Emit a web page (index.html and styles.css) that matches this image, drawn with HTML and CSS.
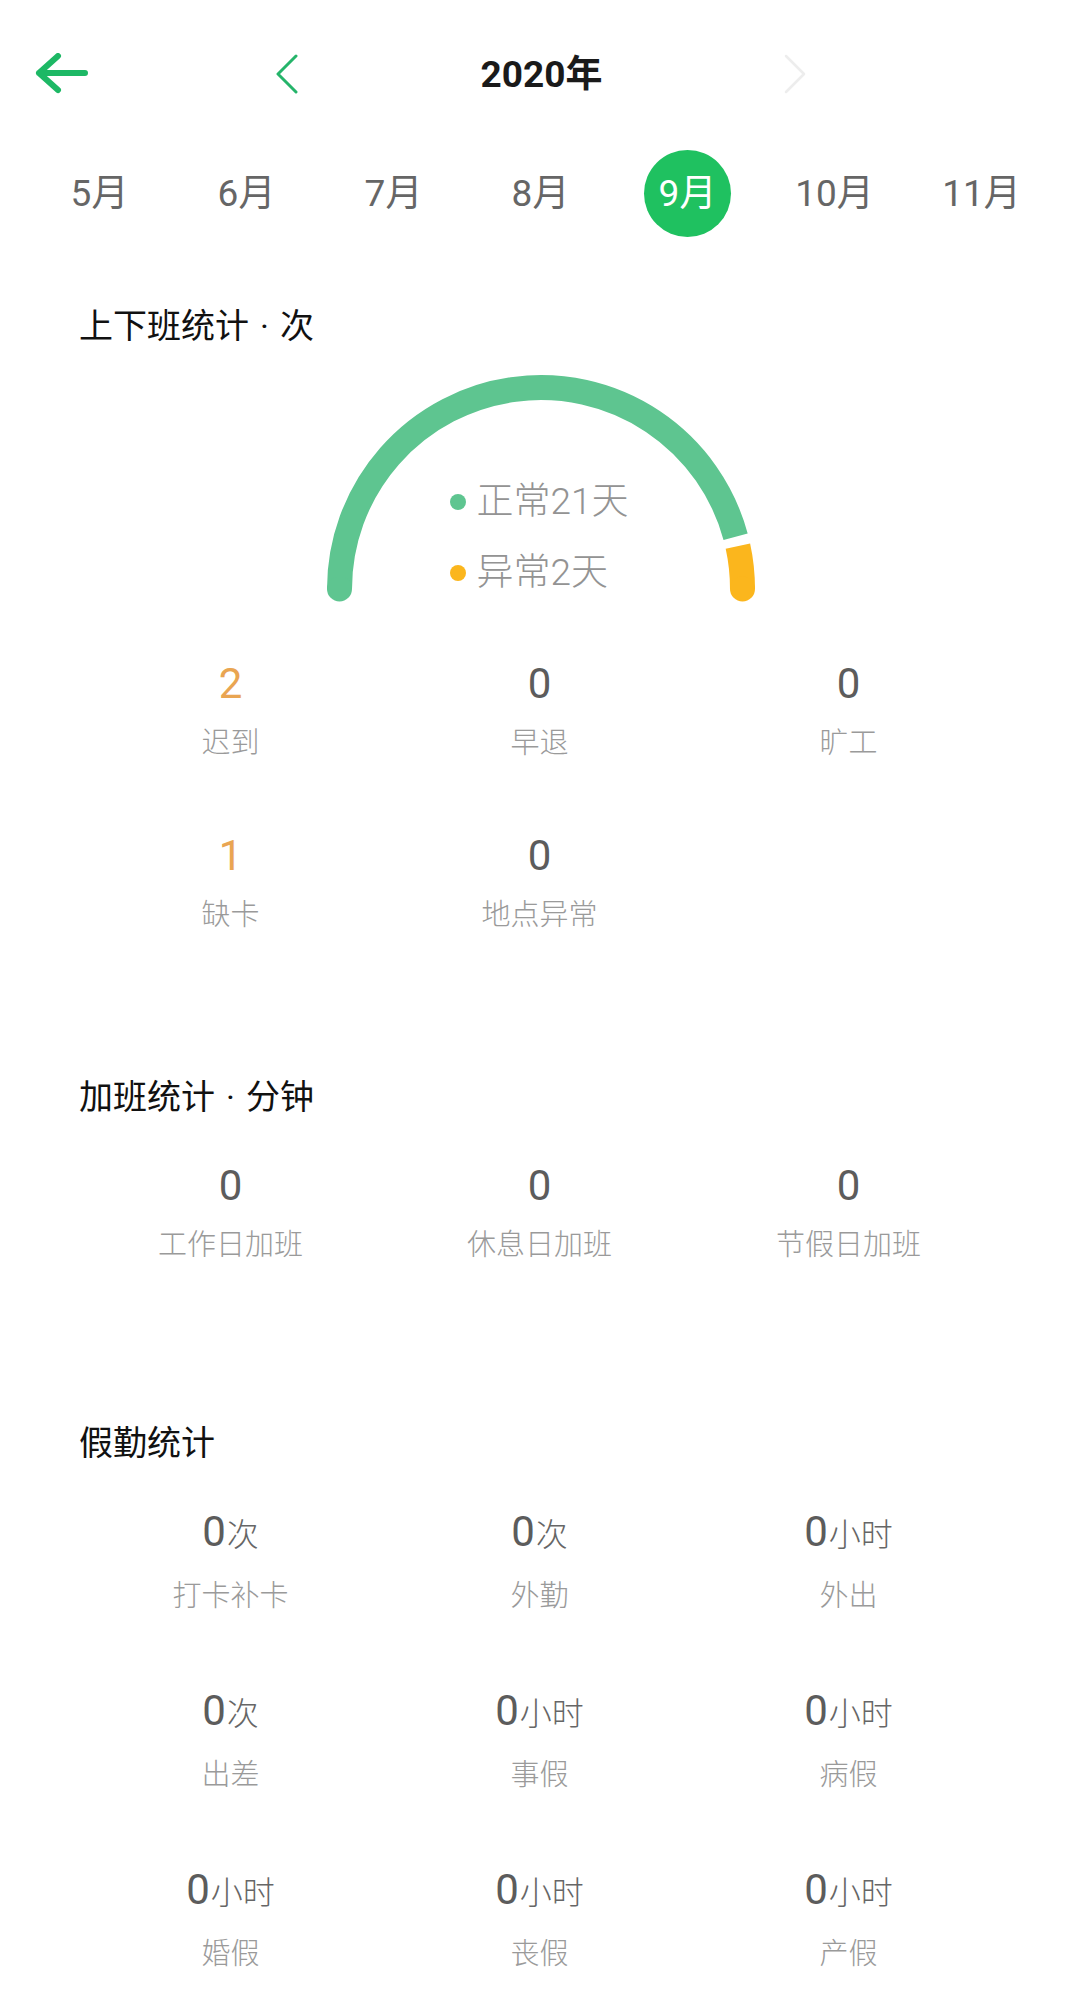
FILE: index.html
```html
<!DOCTYPE html>
<html lang="zh-CN">
<head>
<meta charset="utf-8">
<title>考勤统计</title>
<link rel="stylesheet" href="styles.css">
</head>
<body>
<div class="page">
  <header class="topbar">
    <svg class="back" width="56" height="44" viewBox="0 0 56 44">
      <path d="M5 20 H51 M24 3 L5 20 L24 37" fill="none" stroke="#1db865" stroke-width="6" stroke-linecap="round" stroke-linejoin="round"/>
    </svg>
    <div class="yearnav">
      <svg width="24" height="44" viewBox="0 0 24 44"><path d="M20 3 L2 21 L20 39" fill="none" stroke="#25b46a" stroke-width="3" stroke-linecap="round" stroke-linejoin="round"/></svg>
      <div class="year">2020年</div>
      <svg width="24" height="44" viewBox="0 0 24 44"><path d="M3 3 L21 21 L3 39" fill="none" stroke="#ededed" stroke-width="2.5" stroke-linecap="round" stroke-linejoin="round"/></svg>
    </div>
  </header>

  <nav class="months">
    <div class="month"><span>5月</span></div>
    <div class="month"><span>6月</span></div>
    <div class="month"><span>7月</span></div>
    <div class="month"><span>8月</span></div>
    <div class="month"><span class="current">9月</span></div>
    <div class="month"><span>10月</span></div>
    <div class="month"><span>11月</span></div>
  </nav>

  <section class="section section-commute">
    <h2 class="section-title">上下班统计<span class="sep">·</span>次</h2>
    <div class="gauge">
      <svg class="gauge-arc" width="460" height="250" viewBox="0 0 460 250">
        <path d="M28.5 224 A201.5 201.5 0 0 1 424.6 171.8" fill="none" stroke="#5ec590" stroke-width="25"/>
        <circle cx="28.5" cy="224" r="12.5" fill="#5ec590"/>
        <path d="M426.9 181.1 A201.5 201.5 0 0 1 431.5 224" fill="none" stroke="#fbb61d" stroke-width="25"/>
        <circle cx="431.5" cy="224" r="12.5" fill="#fbb61d"/>
      </svg>
      <ul class="legend">
        <li><i class="dot dot-green"></i>正常21天</li>
        <li><i class="dot dot-yellow"></i>异常2天</li>
      </ul>
    </div>
    <div class="stats">
      <div class="stat"><div class="num warn">2</div><div class="label">迟到</div></div>
      <div class="stat"><div class="num">0</div><div class="label">早退</div></div>
      <div class="stat"><div class="num">0</div><div class="label">旷工</div></div>
      <div class="stat"><div class="num warn">1</div><div class="label">缺卡</div></div>
      <div class="stat"><div class="num">0</div><div class="label">地点异常</div></div>
    </div>
  </section>

  <section class="section section-overtime">
    <h2 class="section-title">加班统计<span class="sep">·</span>分钟</h2>
    <div class="stats">
      <div class="stat"><div class="num">0</div><div class="label">工作日加班</div></div>
      <div class="stat"><div class="num">0</div><div class="label">休息日加班</div></div>
      <div class="stat"><div class="num">0</div><div class="label">节假日加班</div></div>
    </div>
  </section>

  <section class="section section-leave">
    <h2 class="section-title">假勤统计</h2>
    <div class="stats stats-leave">
      <div class="stat"><div class="num">0<small>次</small></div><div class="label">打卡补卡</div></div>
      <div class="stat"><div class="num">0<small>次</small></div><div class="label">外勤</div></div>
      <div class="stat"><div class="num">0<small>小时</small></div><div class="label">外出</div></div>
      <div class="stat"><div class="num">0<small>次</small></div><div class="label">出差</div></div>
      <div class="stat"><div class="num">0<small>小时</small></div><div class="label">事假</div></div>
      <div class="stat"><div class="num">0<small>小时</small></div><div class="label">病假</div></div>
      <div class="stat"><div class="num">0<small>小时</small></div><div class="label">婚假</div></div>
      <div class="stat"><div class="num">0<small>小时</small></div><div class="label">丧假</div></div>
      <div class="stat"><div class="num">0<small>小时</small></div><div class="label">产假</div></div>
    </div>
  </section>
</div>
</body>
</html>
```

FILE: styles.css
```css
* { box-sizing: border-box; }

html, body {
  margin: 0;
  padding: 0;
  background: #ffffff;
}

body {
  font-family: Roboto, "Noto Sans CJK SC", sans-serif;
  color: #222;
  width: 1080px;
}

.page {
  width: 1080px;
  min-height: 1995px;
}

/* header */
.topbar {
  height: 150px;
  display: flex;
  align-items: center;
  padding-left: 34px;
}

.back {
  display: block;
  flex: none;
}

.yearnav {
  margin-left: 186px;
  width: 531px;
  display: flex;
  align-items: center;
  justify-content: space-between;
}

.yearnav svg { display: block; }

.year {
  font-size: 37px;
  font-weight: 700;
  color: #1a1a1a;
  line-height: 44px;
}

/* months */
.months {
  height: 87px;
  padding: 0 26px;
  display: grid;
  grid-template-columns: repeat(7, 147px);
}

.month {
  display: flex;
  align-items: center;
  justify-content: center;
}

.month span {
  font-size: 37px;
  color: #666;
  line-height: 87px;
}

.month .current {
  width: 87px;
  height: 87px;
  border-radius: 50%;
  background: #1fc160;
  color: #fff;
  display: flex;
  align-items: center;
  justify-content: center;
}

/* sections */
.section {
  padding: 0 77px 0 76px;
}

.section-title {
  margin: 0;
  padding-left: 3px;
  font-size: 34px;
  font-weight: 400;
  line-height: 40px;
  color: #111;
}

.sep {
  margin: 0 11px;
}

.section-commute { margin-top: 69px; }
.section-overtime { margin-top: 142px; }
.section-leave { margin-top: 158px; }

/* gauge */
.gauge {
  position: relative;
  width: 460px;
  height: 250px;
  margin: 19px auto 0;
  left: 1px;
}

.gauge-arc {
  position: absolute;
  left: 0;
  top: 0;
}

.legend {
  position: relative;
  list-style: none;
  margin: 0 0 0 139px;
  padding: 112px 0 0;
  display: flex;
  flex-direction: column;
  gap: 21px;
}

.legend li {
  display: flex;
  align-items: center;
  gap: 11px;
  font-size: 37px;
  line-height: 50px;
  color: #939393;
  font-weight: 300;
}

.dot {
  width: 16px;
  height: 16px;
  border-radius: 50%;
  flex: none;
}

.dot-green { background: #5ec590; }
.dot-yellow { background: #fbb61d; }

/* stat grid */
.stats {
  display: grid;
  grid-template-columns: repeat(3, 309px);
  row-gap: 68px;
  margin-top: 44px;
}

.stat {
  display: flex;
  flex-direction: column;
  align-items: center;
}

.num {
  font-size: 42px;
  line-height: 50px;
  color: #5c5c5c;
  font-weight: 400;
}

.num.warn { color: #e9a552; }

.num small {
  font-size: 32px;
  color: #666;
  font-weight: 300;
  margin-left: 1px;
}

.label {
  margin-top: 14px;
  font-size: 29px;
  line-height: 40px;
  color: #9a9a9a;
  font-weight: 300;
}

.stats-leave { row-gap: 70px; }
.stats-leave .label { margin-top: 16px; }
```
